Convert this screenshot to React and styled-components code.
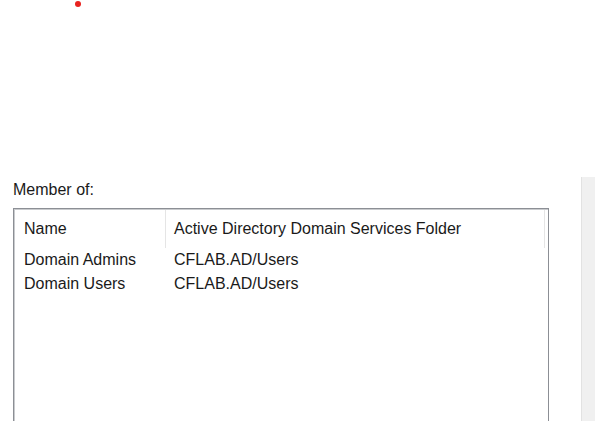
import React from 'react';
import styled, { createGlobalStyle } from 'styled-components';

const GlobalStyle = createGlobalStyle`
    html, body {
        margin: 0;
        padding: 0;
        background: #ffffff;
    }
    body {
        font-family: "Liberation Sans", Arial, sans-serif;
        color: #1a1a1a;
        width: 595px;
        height: 421px;
        overflow: hidden;
    }
`;

const members = [
    { name: 'Domain Admins', folder: 'CFLAB.AD/Users' },
    { name: 'Domain Users', folder: 'CFLAB.AD/Users' },
];

const App = () => {
    return (
        <Page>
            <GlobalStyle />
            <TopArea>
                <Dot />
            </TopArea>
            <Body>
                <Main>
                    <Label>Member of:</Label>
                    <ListView>
                        <HeaderRow>
                            <HeadCell first>Name</HeadCell>
                            <HeadCell>Active Directory Domain Services Folder</HeadCell>
                        </HeaderRow>
                        {members.map((m, idx) => (
                            <Row key={idx}>
                                <Cell first>{m.name}</Cell>
                                <Cell>{m.folder}</Cell>
                            </Row>
                        ))}
                    </ListView>
                </Main>
                <SidePanel />
            </Body>
        </Page>
    );
};

const Page = styled.div`
    width: 595px;
    height: 421px;
    display: flex;
    flex-direction: column;
`;

const TopArea = styled.div`
    height: 177px;
    padding-left: 75px;
    padding-top: 1px;
    box-sizing: border-box;
`;

// 빨간 점
const Dot = styled.div`
    width: 6px;
    height: 6px;
    border-radius: 50%;
    background: #e8231f;
`;

const Body = styled.div`
    flex: 1;
    display: flex;
    min-height: 0;
`;

const Main = styled.div`
    width: 549px;
    padding-left: 13px;
    box-sizing: border-box;
    display: flex;
    flex-direction: column;
`;

const Label = styled.div`
    font-size: 16px;
    height: 31px;
    line-height: 19px;
    padding-top: 3px;
    box-sizing: border-box;
`;

const ListView = styled.div`
    flex: 1;
    border: 1px solid #8c8f95;
    border-bottom: none;
    box-shadow: inset 1px 1px 0 #c9cbce;
    display: flex;
    flex-direction: column;
`;

const HeaderRow = styled.div`
    display: flex;
    height: 38px;
    padding: 1px 3px 0 1px;
`;

const HeadCell = styled.div`
    width: ${(p) => (p.first ? '151px' : 'auto')};
    flex: ${(p) => (p.first ? 'none' : 1)};
    font-size: 16px;
    line-height: 37px;
    padding-left: ${(p) => (p.first ? '9px' : '8px')};
    box-sizing: border-box;
    border-right: 1px solid #e5e5e5;
    white-space: nowrap;
`;

const Row = styled.div`
    display: flex;
    height: 24px;
    padding-left: 1px;
`;

const Cell = styled.div`
    width: ${(p) => (p.first ? '151px' : 'auto')};
    flex: ${(p) => (p.first ? 'none' : 1)};
    font-size: 16px;
    line-height: 24px;
    padding-left: ${(p) => (p.first ? '9px' : '8px')};
    box-sizing: border-box;
    white-space: nowrap;
`;

const SidePanel = styled.div`
    margin-left: 32px;
    flex: 1;
    background: #f0f0f0;
    border-left: 1px solid #e2e2e2;
`;

export default App;
